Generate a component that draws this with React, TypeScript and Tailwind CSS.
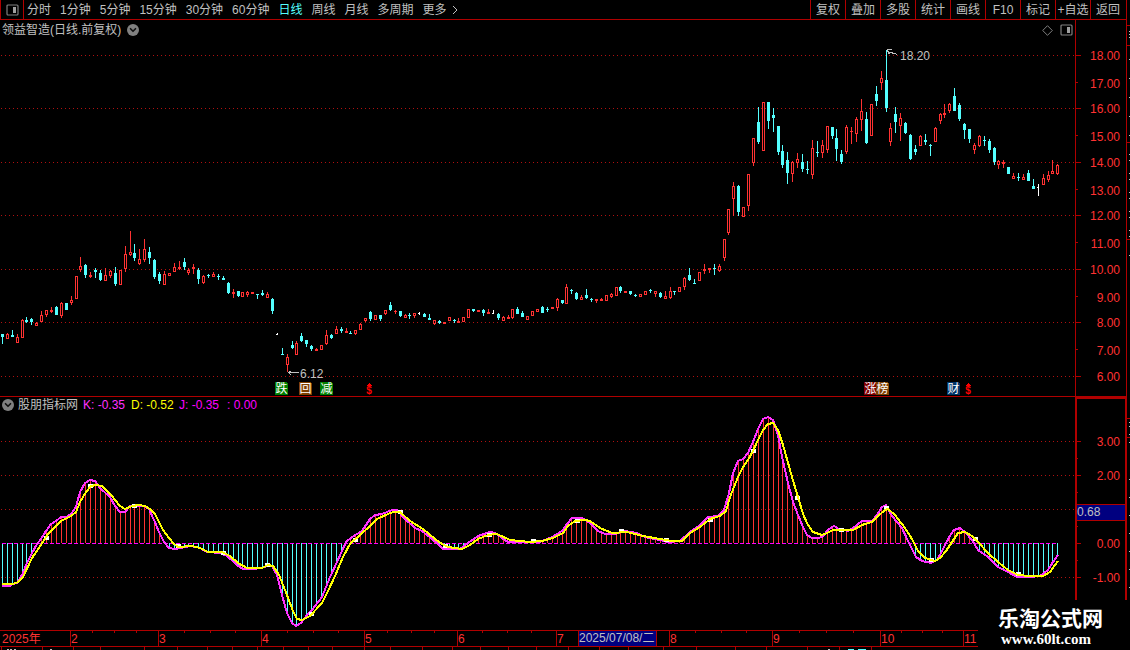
import { ChevronDown } from "lucide-react";

const UP = "#ff3232";
const DOWN = "#54ffff";
const AXIS = "#b00000";

// x, high, body top, body bottom, low, direction (1 up, -1 down, 0 flat)
type Candle = [number, number, number, number, number, number];
type Point = [number, number];

const candles: Candle[] = [
  [2, 334, 334, 337, 344, -1], [7, 333, 334, 339, 339, 1], [12, 330, 335, 337, 337, -1], [17, 334, 337, 343, 343, 1],
  [22, 319, 320, 338, 338, 1], [26, 317, 320, 322, 323, -1], [31, 318, 319, 322, 325, -1], [36, 322, 323, 326, 326, 1],
  [41, 311, 315, 322, 322, 1], [46, 310, 310, 315, 317, 1], [51, 307, 310, 312, 313, 1], [56, 306, 307, 315, 315, -1],
  [61, 302, 303, 316, 318, 1], [66, 303, 303, 310, 310, -1], [71, 296, 300, 303, 305, 1], [76, 276, 276, 299, 299, 1],
  [80, 257, 266, 270, 272, 1], [85, 264, 265, 275, 278, -1], [90, 272, 275, 277, 278, 1], [95, 268, 270, 272, 278, -1],
  [100, 270, 273, 280, 281, -1], [105, 268, 275, 281, 281, 1], [110, 270, 271, 276, 278, 1], [115, 267, 273, 284, 286, -1],
  [120, 270, 270, 285, 285, 1], [125, 246, 254, 269, 272, 1], [130, 231, 252, 255, 256, 1], [134, 244, 253, 258, 261, -1],
  [139, 249, 259, 264, 265, 1], [144, 239, 249, 260, 262, 1], [149, 247, 252, 258, 264, -1], [154, 259, 260, 277, 279, -1],
  [159, 272, 274, 281, 284, -1], [164, 271, 274, 285, 285, 1], [169, 273, 273, 276, 276, 1], [174, 263, 267, 272, 272, 1],
  [179, 261, 267, 269, 270, 1], [184, 258, 262, 267, 270, -1], [188, 268, 270, 273, 275, 1], [193, 264, 267, 269, 274, 1],
  [198, 268, 270, 279, 284, -1], [203, 275, 276, 283, 284, 1], [208, 274, 275, 276, 278, -1], [213, 272, 274, 277, 277, 1],
  [218, 274, 276, 277, 280, -1], [223, 276, 278, 280, 280, -1], [228, 282, 283, 293, 294, -1], [233, 289, 292, 294, 298, 1],
  [238, 291, 291, 296, 297, -1], [242, 292, 292, 297, 297, 1], [247, 291, 292, 295, 297, 1], [252, 292, 292, 294, 294, 1],
  [257, 294, 294, 295, 299, -1], [262, 290, 293, 295, 296, -1], [267, 292, 294, 298, 298, 1], [272, 298, 299, 311, 314, -1],
  [277, 333, 334, 335, 335, 0], [282, 348, 354, 355, 355, -1], [287, 354, 357, 365, 372, 1], [292, 341, 345, 348, 349, -1],
  [296, 341, 343, 355, 355, 1], [301, 333, 336, 341, 342, -1], [306, 340, 340, 344, 347, -1], [311, 345, 346, 349, 351, -1],
  [316, 348, 349, 351, 351, 1], [321, 345, 345, 350, 350, 1], [326, 330, 335, 344, 345, 1], [331, 334, 335, 338, 339, -1],
  [336, 326, 329, 334, 334, 1], [341, 327, 329, 331, 333, -1], [346, 328, 331, 333, 333, 1], [350, 331, 333, 334, 334, -1],
  [355, 330, 330, 334, 335, 1], [360, 323, 324, 330, 330, 1], [365, 318, 318, 321, 322, 1], [370, 311, 312, 319, 321, -1],
  [375, 315, 315, 320, 320, 1], [380, 315, 315, 319, 321, -1], [385, 310, 310, 314, 315, 1], [390, 302, 305, 310, 311, -1],
  [395, 310, 311, 312, 314, 1], [400, 311, 311, 316, 317, -1], [405, 314, 315, 318, 318, 1], [409, 313, 315, 316, 319, -1],
  [414, 313, 313, 316, 318, 1], [419, 312, 313, 314, 315, 0], [424, 313, 314, 317, 317, -1], [429, 314, 318, 320, 320, -1],
  [434, 320, 320, 324, 325, 1], [439, 320, 321, 323, 324, -1], [444, 322, 322, 324, 324, 1], [449, 317, 317, 321, 321, 1],
  [454, 319, 320, 321, 323, -1], [458, 318, 321, 323, 323, 1], [463, 317, 317, 322, 322, 1], [468, 309, 309, 318, 318, 1],
  [473, 309, 309, 311, 312, -1], [478, 310, 310, 312, 312, 1], [483, 309, 310, 313, 316, -1], [488, 309, 312, 314, 314, 1],
  [493, 310, 313, 314, 314, 0], [498, 313, 314, 318, 320, -1], [503, 316, 317, 321, 321, 1], [508, 315, 317, 319, 319, 1],
  [512, 309, 309, 318, 319, 1], [517, 307, 309, 314, 314, -1], [522, 311, 313, 317, 317, -1], [527, 316, 316, 320, 320, 1],
  [532, 311, 311, 316, 316, 1], [537, 309, 309, 312, 312, 1], [542, 306, 307, 313, 313, -1], [547, 307, 309, 310, 312, -1],
  [552, 307, 307, 309, 309, 1], [557, 298, 299, 308, 311, 1], [562, 300, 300, 303, 304, -1], [566, 284, 287, 304, 304, 1],
  [571, 289, 290, 291, 294, -1], [576, 292, 293, 299, 300, -1], [581, 295, 297, 300, 300, 1], [586, 289, 295, 298, 299, -1],
  [591, 298, 299, 300, 302, -1], [596, 299, 299, 301, 303, 1], [601, 298, 299, 301, 301, 1], [606, 295, 295, 301, 301, 1],
  [611, 293, 294, 297, 298, 1], [616, 287, 287, 296, 296, 1], [620, 286, 287, 291, 293, -1], [625, 291, 291, 293, 293, 1],
  [630, 291, 291, 294, 295, -1], [635, 294, 295, 296, 297, -1], [640, 294, 294, 297, 297, 1], [645, 291, 291, 295, 295, 1],
  [650, 289, 290, 291, 293, -1], [655, 291, 291, 294, 297, 1], [660, 292, 293, 297, 298, -1], [665, 291, 296, 299, 299, 1],
  [670, 287, 291, 298, 299, 1], [674, 291, 291, 292, 295, -1], [679, 287, 287, 292, 292, 1], [684, 277, 278, 287, 290, 1],
  [689, 268, 275, 280, 281, -1], [694, 279, 283, 284, 284, -1], [699, 272, 272, 281, 281, 1], [704, 264, 269, 271, 274, 1],
  [709, 268, 268, 270, 273, 1], [714, 264, 268, 269, 275, -1], [719, 264, 266, 271, 272, 1], [724, 239, 239, 258, 261, 1],
  [728, 209, 209, 233, 235, 1], [733, 182, 186, 199, 216, 1], [738, 185, 186, 212, 216, -1], [743, 207, 207, 217, 217, 1],
  [748, 174, 174, 206, 211, 1], [753, 138, 138, 163, 166, 1], [758, 107, 122, 142, 144, -1], [763, 102, 102, 151, 151, 1],
  [768, 102, 102, 121, 129, -1], [773, 108, 115, 118, 132, -1], [778, 126, 126, 152, 155, -1], [782, 145, 151, 165, 168, -1],
  [787, 152, 160, 173, 184, -1], [792, 161, 162, 174, 182, 1], [797, 153, 159, 163, 168, 1], [802, 154, 162, 169, 172, -1],
  [807, 161, 169, 170, 174, -1], [812, 140, 148, 175, 179, 1], [817, 141, 152, 153, 157, -1], [822, 140, 145, 153, 158, 1],
  [827, 126, 126, 150, 153, 1], [832, 127, 127, 136, 139, -1], [836, 129, 138, 149, 161, -1], [841, 150, 154, 162, 164, -1],
  [846, 125, 127, 152, 154, 1], [851, 127, 131, 132, 144, 1], [856, 117, 119, 134, 142, 1], [861, 99, 111, 120, 131, 1],
  [866, 112, 119, 143, 144, -1], [871, 104, 104, 136, 136, 1], [876, 86, 94, 101, 106, -1], [881, 71, 78, 83, 90, 1],
  [886, 50, 80, 108, 112, -1], [890, 123, 128, 142, 146, 1], [895, 107, 114, 122, 133, -1], [900, 113, 118, 126, 141, 1],
  [905, 122, 123, 133, 134, -1], [910, 134, 135, 159, 160, -1], [915, 145, 149, 152, 155, -1], [920, 135, 136, 146, 146, 1],
  [925, 134, 140, 142, 145, -1], [930, 144, 145, 146, 156, -1], [935, 127, 128, 142, 142, 1], [940, 113, 114, 121, 124, 1],
  [944, 104, 113, 115, 118, 1], [949, 103, 104, 111, 113, 1], [954, 88, 96, 111, 111, -1], [959, 103, 105, 119, 121, -1],
  [964, 123, 124, 130, 139, -1], [969, 129, 129, 139, 143, -1], [974, 143, 145, 150, 154, 1], [979, 135, 136, 146, 147, 1],
  [984, 136, 140, 141, 146, -1], [989, 139, 141, 150, 153, -1], [994, 147, 148, 162, 165, -1], [998, 160, 161, 165, 169, 1],
  [1003, 160, 162, 164, 168, 1], [1008, 167, 167, 174, 174, -1], [1013, 173, 176, 179, 179, 1], [1018, 173, 177, 178, 181, -1],
  [1023, 174, 177, 180, 180, 1], [1028, 170, 173, 181, 181, -1], [1033, 179, 186, 189, 189, -1], [1038, 184, 187, 188, 196, 0],
  [1043, 174, 178, 185, 185, 1], [1048, 171, 175, 180, 182, 1], [1052, 160, 171, 174, 174, 1], [1057, 164, 165, 174, 175, 1],
];

const kLine: Point[] = [
  [2, 586], [10, 586], [12, 584], [17, 583], [22, 575], [27, 563], [32, 553], [37, 544], [41, 539], [46, 531], [51, 524],
  [56, 521], [61, 517], [66, 517], [71, 514], [76, 507], [80, 492], [85, 483], [90, 480], [95, 481], [100, 488], [110, 497],
  [115, 506], [120, 512], [125, 512], [130, 506], [134, 505], [139, 506], [144, 506], [149, 509], [154, 520], [159, 532],
  [164, 542], [169, 548], [175, 549], [180, 548], [191, 546], [200, 548], [207, 552], [220, 553], [227, 556], [237, 565],
  [243, 569], [252, 569], [262, 568], [267, 566], [272, 566], [277, 575], [282, 595], [287, 613], [292, 623], [296, 626],
  [301, 623], [307, 615], [312, 610], [322, 597], [330, 577], [337, 562], [346, 542], [352, 537], [362, 531], [370, 519],
  [375, 515], [382, 514], [392, 510], [397, 510], [404, 518], [415, 528], [422, 531], [432, 539], [438, 544], [443, 549],
  [460, 549], [468, 543], [478, 536], [490, 532], [495, 533], [502, 538], [508, 542], [523, 542], [540, 542], [552, 537],
  [562, 531], [567, 524], [572, 518], [582, 518], [590, 523], [598, 531], [605, 534], [615, 534], [625, 531], [637, 533],
  [645, 537], [660, 540], [668, 542], [680, 541], [690, 532], [700, 525], [708, 517], [718, 516], [724, 510], [729, 493],
  [733, 473], [738, 461], [743, 459], [748, 453], [753, 442], [758, 429], [763, 419], [768, 417], [773, 420], [778, 435],
  [782, 457], [788, 483], [793, 502], [798, 515], [803, 527], [807, 535], [812, 538], [818, 538], [822, 537], [829, 529],
  [834, 526], [839, 529], [848, 531], [853, 528], [862, 521], [872, 521], [877, 515], [882, 507], [886, 505], [892, 516],
  [902, 528], [908, 541], [916, 557], [922, 561], [931, 563], [937, 560], [941, 553], [946, 543], [951, 534], [954, 530],
  [960, 528], [965, 532], [972, 540], [978, 550], [988, 557], [998, 567], [1008, 572], [1017, 577], [1030, 577],
  [1040, 576], [1048, 570], [1053, 562], [1058, 555],
];

const dLine: Point[] = [
  [2, 584], [13, 584], [18, 582], [23, 577], [32, 558], [43, 542], [48, 534], [53, 529], [61, 521], [71, 516], [76, 512],
  [80, 502], [86, 492], [91, 486], [96, 485], [102, 486], [111, 495], [120, 506], [125, 509], [132, 506], [139, 505],
  [145, 506], [150, 509], [155, 514], [163, 530], [173, 543], [178, 547], [192, 546], [200, 548], [208, 552], [222, 552],
  [230, 556], [238, 563], [247, 568], [262, 568], [268, 565], [273, 566], [279, 575], [287, 595], [293, 611], [297, 619],
  [302, 620], [310, 616], [322, 603], [328, 591], [335, 576], [343, 557], [350, 544], [360, 535], [370, 526], [377, 519],
  [388, 514], [393, 512], [400, 512], [410, 521], [423, 529], [435, 539], [442, 544], [448, 547], [462, 549], [470, 545],
  [478, 539], [488, 535], [497, 534], [510, 540], [530, 542], [542, 541], [553, 538], [563, 533], [568, 526], [575, 521],
  [585, 520], [590, 521], [600, 528], [612, 533], [627, 532], [643, 536], [660, 539], [672, 541], [682, 541], [690, 533],
  [700, 527], [710, 519], [720, 516], [726, 511], [730, 497], [738, 477], [743, 467], [748, 460], [753, 451], [758, 440],
  [763, 430], [768, 424], [773, 423], [778, 430], [783, 445], [792, 477], [798, 497], [803, 514], [808, 525], [813, 532],
  [822, 535], [827, 533], [833, 530], [853, 530], [862, 525], [872, 522], [878, 516], [885, 510], [888, 509], [895, 515],
  [905, 528], [912, 539], [918, 551], [925, 558], [935, 561], [940, 558], [946, 551], [952, 542], [958, 533], [965, 532],
  [972, 536], [978, 542], [988, 553], [998, 562], [1008, 570], [1018, 575], [1030, 576], [1043, 576], [1050, 572],
  [1058, 561],
];

const markers: Point[] = [
  [46, 538], [90, 486], [134, 506], [178, 546], [223, 553], [267, 565], [311, 614], [355, 540], [400, 512], [445, 546],
  [489, 535], [533, 541], [577, 521], [621, 531], [666, 540], [710, 520], [753, 451], [797, 498], [841, 530], [886, 508],
  [931, 560], [975, 539], [1018, 574],
];

const prices: [string, number][] = [
  ["18.00", 55], ["17.00", 82], ["16.00", 108], ["15.00", 135], ["14.00", 162], ["13.00", 189], ["12.00", 215],
  ["11.00", 242], ["10.00", 269], ["9.00", 296], ["8.00", 322], ["7.00", 349], ["6.00", 376],
];

const months: [string, number][] = [
  ["2", 70], ["3", 158], ["4", 261], ["5", 364], ["6", 457], ["7", 556], ["8", 669], ["9", 772], ["10", 880], ["11", 963],
];
const weekTicks = [
  92, 114, 136, 184, 210, 235, 287, 313, 338, 387, 411, 434, 482, 507, 531, 695, 721, 746, 799, 826, 853, 901, 922, 942,
];
const lowerTicks = [
  1, 42, 73, 100, 144, 177, 207, 232, 257, 283, 308, 332, 364, 390, 422, 452, 480, 508, 536, 568, 599, 628, 663, 696,
  735, 766, 807, 839, 871,
];

const badges = [
  { x: 275, label: "跌", fill: "#008000" },
  { x: 299, label: "回", fill: "#804000" },
  { x: 320, label: "减", fill: "#008000" },
  { x: 864, label: "涨", fill: "#800000" },
  { x: 876, label: "榜", fill: "#804000" },
  { x: 947, label: "财", fill: "#003468" },
];

const periods = ["分时", "1分钟", "5分钟", "15分钟", "30分钟", "60分钟", "日线", "周线", "月线", "多周期", "更多"];
const tools = ["复权", "叠加", "多股", "统计", "画线", "F10", "标记", "+自选", "返回"];

function valueAt(line: Point[], x: number) {
  for (let i = 1; i < line.length; i++) {
    const [x0, y0] = line[i - 1];
    const [x1, y1] = line[i];
    if (x <= x1) return Math.round(y0 + ((y1 - y0) * (x - x0)) / (x1 - x0));
  }
  return line[line.length - 1][1];
}

function PanelIcon() {
  return (
    <svg width="13" height="12" viewBox="0 0 13 12" fill="none" aria-hidden>
      <rect x="1" y="1" width="11" height="10" rx="1" stroke="#808080" strokeWidth="1.2" />
      <rect x="7" y="3" width="3" height="6" fill="#a0a0a0" />
    </svg>
  );
}

function RoundToggle({ label }: { label: string }) {
  return (
    <button type="button" aria-label={label} className="grid h-3 w-3 place-items-center rounded-full bg-[#808080]">
      <ChevronDown size={10} strokeWidth={4} color="#101010" />
    </button>
  );
}

function GridLine({ y }: { y: number }) {
  return <line x1="1" x2="1075" y1={y + 0.5} y2={y + 0.5} stroke="#b01010" strokeDasharray="1 3" />;
}

function CandleBar({ candle }: { candle: Candle }) {
  const [x, high, top, bottom, low, dir] = candle;
  const color = dir > 0 ? UP : dir < 0 ? DOWN : "#ffffff";
  return (
    <g fill={color}>
      <rect x={x} y={high} width="1" height={top - high} />
      <rect x={x - 1} y={top} width={dir === 0 ? 2 : 3} height={bottom - top} />
      <rect x={x} y={bottom} width="1" height={low - bottom} />
      {dir > 0 && bottom - top > 2 && <rect x={x} y={top + 1} width="1" height={bottom - top - 2} fill="#000" />}
    </g>
  );
}

function DividendMark({ x }: { x: number }) {
  return (
    <g>
      <path d={`M${x - 3} 386h6l-3-3z`} fill="#ff0000" />
      <text x={x} y="394" textAnchor="middle" fontSize="10" fontWeight="700" fill="#ff0000">
        $
      </text>
    </g>
  );
}

function PriceChart() {
  return (
    <svg viewBox="0 40 1126 357" className="block w-full" shapeRendering="crispEdges" fontSize="12">
      {prices.map(([label, y], i) => (
        <g key={label}>
          {i % 2 === 0 && <GridLine y={y} />}
          <rect x="1076" y={y} width={i % 2 === 0 ? 5 : 2} height="1" fill={AXIS} />
          <text x="1120" y={i % 2 === 0 ? y + 5 : y + 6} textAnchor="end" fill={UP}>
            {label}
          </text>
        </g>
      ))}
      <rect x="1075" y="40" width="1" height="356" fill={AXIS} />
      <rect x="0" y="396" width="1126" height="1" fill={AXIS} />
      {candles.map((c) => (
        <CandleBar key={c[0]} candle={c} />
      ))}
      <path d="M897.5 54.500L887.500 51.500M891.500 49.500H887.500V50.500L889.500 54.500" stroke="#c0c0c0" fill="none" />
      <text x="900" y="60" fill="#c0c0c0">
        18.20
      </text>
      <path d="M298.500 372.500H287.500M291.500 370.500L288.500 372.500L291.500 375.500" stroke="#c0c0c0" fill="none" />
      <text x="300" y="378" fill="#c0c0c0">
        6.12
      </text>
      {badges.map((b) => (
        <g key={b.x}>
          <path d={`M${b.x} 382h11l2 2v11h-13z`} fill={b.fill} />
          <text x={b.x + 6.5} y="393" textAnchor="middle" fill="#fff">
            {b.label}
          </text>
        </g>
      ))}
      <DividendMark x={369} />
      <DividendMark x={968} />
    </svg>
  );
}

function IndicatorChart() {
  const scale: [string, number][] = [["3.00", 441], ["2.00", 475], ["", 509], ["0.00", 543], ["-1.00", 577]];
  return (
    <svg viewBox="0 413 1126 217" className="block w-full" shapeRendering="crispEdges" fontSize="12">
      {scale.map(([label, y]) => (
        <g key={y}>
          {y !== 543 && <GridLine y={y} />}
          <rect x="1077" y={y} width="4" height="1" fill={AXIS} />
          <text x="1120" y={y + 5} textAnchor="end" fill={UP}>
            {label}
          </text>
        </g>
      ))}
      {[458, 492, 526, 560].map((y) => (
        <rect key={y} x="1077" y={y} width="1" height="1" fill={AXIS} />
      ))}
      {candles.map(([x]) => {
        const y = valueAt(kLine, x);
        return (
          <rect key={x} x={x} y={Math.min(y, 543)} width="1" height={Math.abs(y - 543)} fill={y < 543 ? UP : DOWN} />
        );
      })}
      <line x1="2" x2="1058" y1="543.5" y2="543.5" stroke="#ff00ff" strokeDasharray="4 2" />
      <polyline points={kLine.join(" ")} fill="none" stroke="#ff32ff" strokeWidth="2" />
      {markers.map(([x, y]) => (
        <rect key={x} x={x - 2} y={y - 2} width="5" height="4" fill="#fff" />
      ))}
      <polyline points={dLine.join(" ")} fill="none" stroke="#ffff00" strokeWidth="2" />
      <rect x="1075" y="413" width="2" height="217" fill={AXIS} />
      <rect x="1125" y="413" width="1" height="217" fill={AXIS} />
      <rect x="1077" y="504" width="48" height="17" fill={AXIS} />
      <rect x="1077" y="505" width="48" height="15" fill="#000080" />
      <text x="1077" y="516" fill="#c0c0c0">
        0.68
      </text>
    </svg>
  );
}

function TimeAxis() {
  return (
    <svg viewBox="0 630 1126 20" className="block w-full" shapeRendering="crispEdges" fontSize="12">
      <rect x="0" y="630" width="1126" height="1" fill={AXIS} />
      <rect x="0" y="646" width="1126" height="1" fill={AXIS} />
      <text x="2" y="643" fill={UP}>
        2025年
      </text>
      {months.map(([label, x]) => (
        <g key={label}>
          <rect x={x} y="630" width="1" height="16" fill={AXIS} />
          <text x={x + 1} y="643" fill={UP}>
            {label}
          </text>
        </g>
      ))}
      {weekTicks.map((x) => (
        <rect key={x} x={x} y="631" width="1" height="2" fill={AXIS} />
      ))}
      {lowerTicks.map((x) => (
        <rect key={x} x={x} y="647" width="1" height="3" fill={AXIS} />
      ))}
      <rect x="578" y="631" width="79" height="15" fill={AXIS} />
      <rect x="579" y="631" width="77" height="15" fill="#000080" />
      <text x="579" y="642" fill="#c0c0c0">
        2025/07/08/二
      </text>
      <path d="M7 649.500h2M10 649.500h2M14 649.500h2M50 649.500h2M828 649.500h2" stroke="#c0c0c0" />
      <path d="M848 649.500h6M858 649.500h8" stroke={DOWN} />
    </svg>
  );
}

// Sliver of the neighbouring quote panel
function SideStrip() {
  const rows = [
    31, 34, 37, 59, 78, 97, 116, 135, 154, 160, 173, 179, 192, 198, 211, 217, 230, 236, 255, 422, 426, 434, 442, 479, 497,
    515, 533, 551, 569, 587,
  ];
  return (
    <svg width="4" className="shrink-0 self-stretch" shapeRendering="crispEdges" aria-hidden>
      <rect width="1" height="100%" fill={AXIS} />
      {[25, 45, 142, 239, 418, 437].map((y) => (
        <rect key={y} x="1" y={y} width="3" height="1" fill={AXIS} />
      ))}
      {rows.map((y) => (
        <rect key={y} x="3" y={y} width="1" height="1" fill="#c0c0c0" />
      ))}
    </svg>
  );
}

export default function App() {
  return (
    <div className="relative flex min-h-screen bg-black font-['Liberation_Sans','Noto_Sans_CJK_SC',sans-serif] text-[12px] leading-4 text-[#c0c0c0]">
      <main className="min-w-0 flex-1">
        <header className="flex h-5 justify-between border-b border-[#b00000]">
          <div className="flex">
            <button
              type="button"
              aria-label="切换面板"
              className="grid w-6 place-items-center border-x border-[#b00000]"
            >
              <PanelIcon />
            </button>
            <nav className="flex items-center gap-[9px] pl-[3px] whitespace-nowrap">
              {periods.map((p) => (
                <button key={p} type="button" className={p === "日线" ? "text-[#54ffff]" : ""}>
                  {p}
                </button>
              ))}
              <svg width="6" height="10" viewBox="0 0 6 10" fill="none" className="-ml-1" aria-hidden>
                <path d="M1 1l4 4-4 4" stroke="#c0c0c0" />
              </svg>
            </nav>
          </div>
          <div className="flex pr-px">
            {tools.map((t) => (
              <button key={t} type="button" className="w-[35px] border-l border-[#b00000] whitespace-nowrap">
                {t}
              </button>
            ))}
          </div>
        </header>

        <section>
          <div className="flex h-5 items-center">
            <h1 className="flex flex-1 items-center gap-1.5 pl-[2px]">
              领益智造(日线.前复权)
              <RoundToggle label="展开" />
            </h1>
            <div className="flex items-center gap-[7px] pr-[2px]">
              <svg width="11" height="11" viewBox="0 0 11 11" fill="none" aria-hidden>
                <path d="M5.500 0.700L10.300 5.500L5.500 10.300L0.700 5.500Z" stroke="#808080" />
              </svg>
              <PanelIcon />
            </div>
            <div className="w-[51px] self-stretch border-l border-[#b00000]" />
          </div>
          <PriceChart />
        </section>

        <section>
          <div className="flex h-4 items-center">
            <div className="flex flex-1 items-center pl-[2px]">
              <RoundToggle label="指标" />
              <h2 className="w-[69px] pl-1">股朋指标网</h2>
              <span className="w-12 text-[#ff32ff]">K: -0.35</span>
              <span className="w-12 text-[#ffff00]">D: -0.52</span>
              <span className="w-12 text-[#ff00ff]">J: -0.35</span>
              <span className="text-[#ff00ff]">: 0.00</span>
            </div>
            <div className="w-[51px] self-stretch border-t-2 border-r border-l-2 border-[#b00000]" />
          </div>
          <IndicatorChart />
        </section>

        <TimeAxis />
      </main>
      <SideStrip />

      <footer className="absolute right-0 bottom-0 flex h-[50px] w-[152px] flex-col bg-black pt-[7px] pl-5 text-white">
        <span className="text-[21px] leading-6 font-bold">乐淘公式网</span>
        <a href="#" className="pl-[3px] font-['Liberation_Serif',serif] text-[15px] leading-4 font-bold">
          www.60lt.com
        </a>
      </footer>
    </div>
  );
}
